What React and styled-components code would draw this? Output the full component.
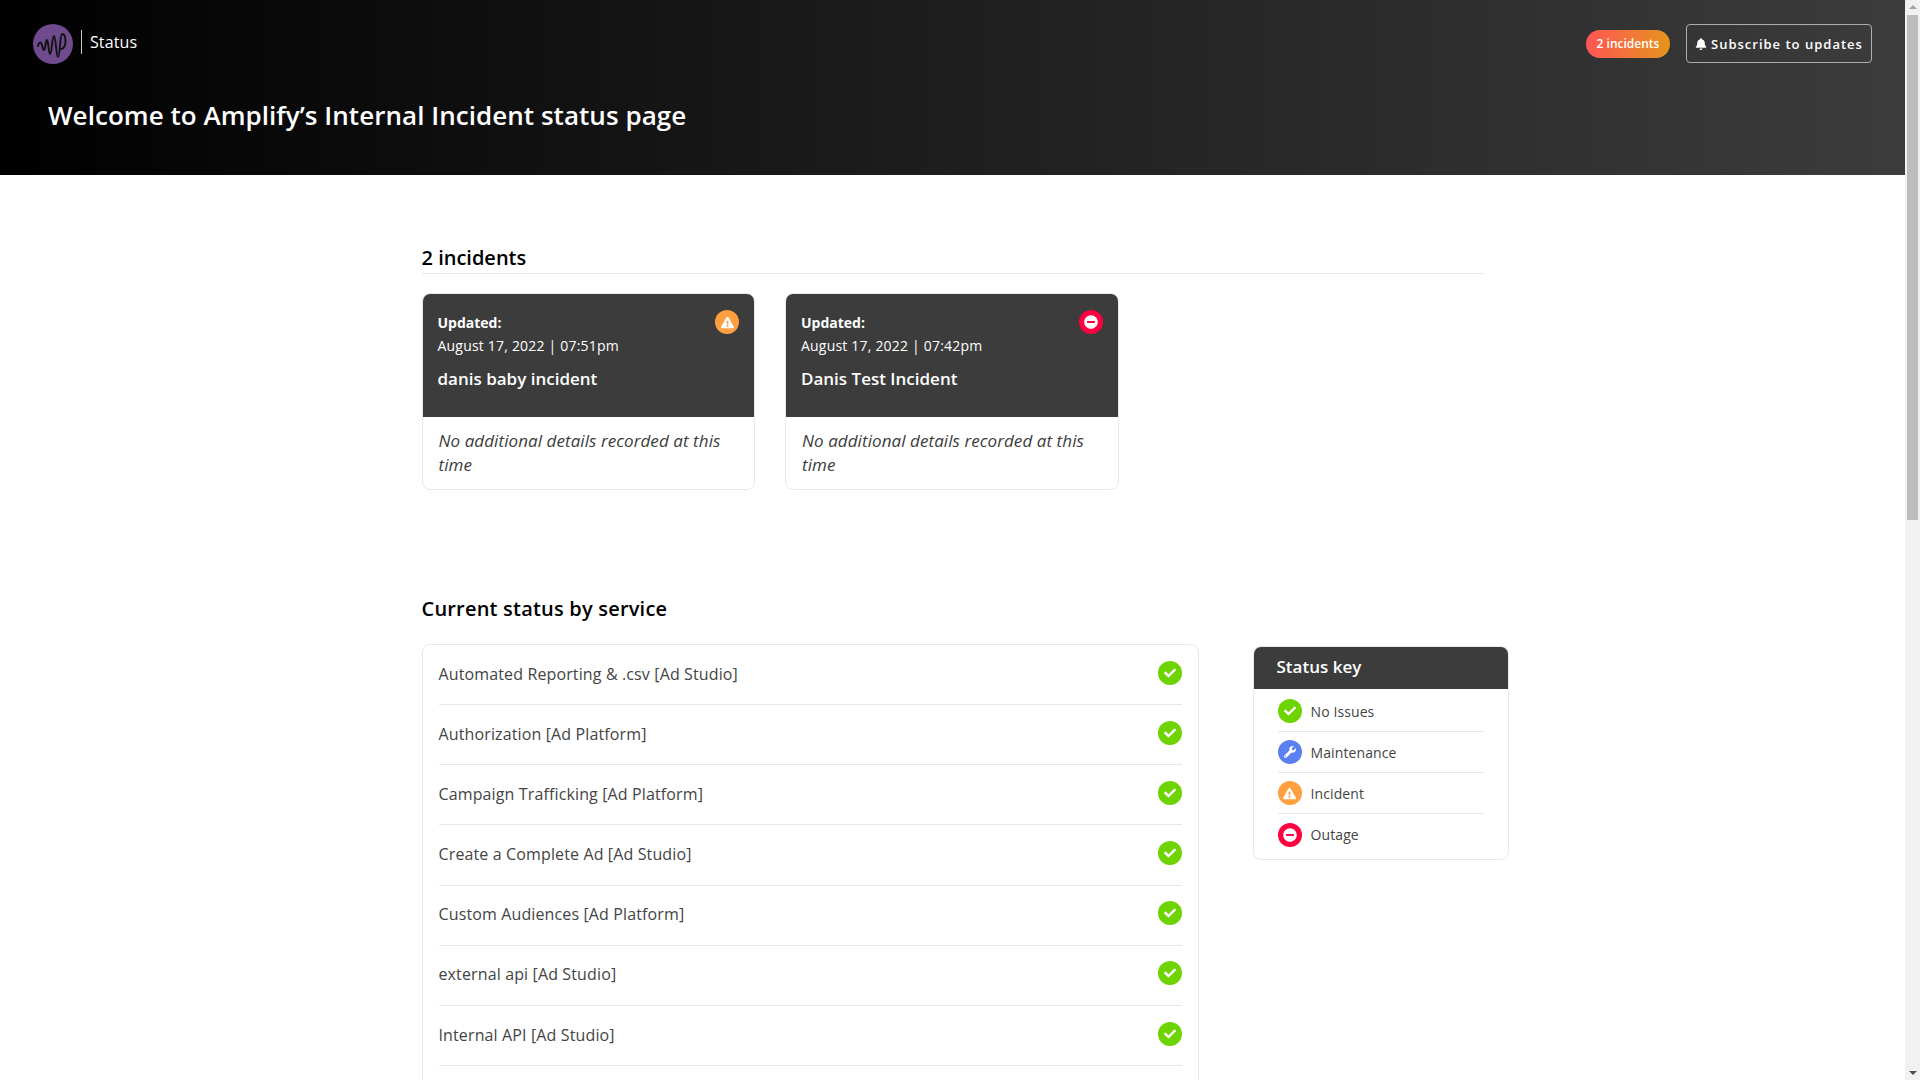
import styled, { createGlobalStyle } from "styled-components";
import {
  FaBell,
  FaCheck,
  FaExclamationTriangle,
  FaMinusCircle,
  FaWrench,
} from "react-icons/fa";

const statusTypes = {
  ok: { color: "#6dd400", Icon: FaCheck, size: 12 },
  maintenance: { color: "#5b80f2", Icon: FaWrench, size: 12 },
  incident: { color: "#ff9f40", Icon: FaExclamationTriangle, size: 13 },
  outage: { color: "#ff0040", Icon: FaMinusCircle, size: 14 },
};

const incidents = [
  { id: 1, date: "August 17, 2022 | 07:51pm", title: "danis baby incident", status: "incident" },
  { id: 2, date: "August 17, 2022 | 07:42pm", title: "Danis Test Incident", status: "outage" },
];

const services = [
  "Automated Reporting & .csv [Ad Studio]",
  "Authorization [Ad Platform]",
  "Campaign Trafficking [Ad Platform]",
  "Create a Complete Ad [Ad Studio]",
  "Custom Audiences [Ad Platform]",
  "external api [Ad Studio]",
  "Internal API [Ad Studio]",
];

const statusKey = [
  { label: "No Issues", status: "ok" },
  { label: "Maintenance", status: "maintenance" },
  { label: "Incident", status: "incident" },
  { label: "Outage", status: "outage" },
];

const StatusIcon = ({ status }) => {
  const { color, Icon, size } = statusTypes[status];
  return (
    <IconDot $color={color}>
      <Icon size={size} />
    </IconDot>
  );
};

const Logo = () => (
  <svg width="40" height="40" viewBox="0 0 40 40">
    <circle cx="20" cy="20" r="20" fill="#6f4a8c" />
    <path
      d="M5 22C5.500 19 7 18 8 19C9.500 20 9.500 26 11 26C12.500 26 12.500 16 14 16C15.500 16 15.500 30 17 30C19 30 19 12 21 12C23 12 23 33 25 33C27 33 27 10 29 10C31.500 10 32.500 14 32.500 17C32.500 21 31 24 28.500 25"
      fill="none"
      stroke="#111"
      strokeWidth="1.9"
      strokeLinecap="round"
    />
  </svg>
);

const App = () => {
  return (
    <>
      <GlobalStyle />
      <Frame>
        <Scroller>
          <Page>
            <Header>
              <TopBar>
                <Brand>
                  <Logo />
                  <BrandText>Status</BrandText>
                </Brand>
                <TopActions>
                  <IncidentBadge>2 incidents</IncidentBadge>
                  <SubscribeButton>
                    <FaBell size={12} />
                    Subscribe to updates
                  </SubscribeButton>
                </TopActions>
              </TopBar>
              <PageTitle>Welcome to Amplify’s Internal Incident status page</PageTitle>
            </Header>

            <Main>
              <IncidentsTitle>2 incidents</IncidentsTitle>
              <IncidentGrid>
                {incidents.map((item) => (
                  <IncidentCard key={item.id}>
                    <IncidentHead>
                      <UpdatedRow>
                        <UpdatedLabel>Updated:</UpdatedLabel>
                        <StatusIcon status={item.status} />
                      </UpdatedRow>
                      <UpdatedDate>{item.date}</UpdatedDate>
                      <IncidentName>{item.title}</IncidentName>
                    </IncidentHead>
                    <IncidentBody>No additional details recorded at this time</IncidentBody>
                  </IncidentCard>
                ))}
              </IncidentGrid>

              <ServicesTitle>Current status by service</ServicesTitle>
              <ServicesLayout>
                <ServiceList>
                  {services.map((name) => (
                    <ServiceRow key={name}>
                      <span>{name}</span>
                      <StatusIcon status="ok" />
                    </ServiceRow>
                  ))}
                </ServiceList>
                <KeyCard>
                  <KeyHead>Status key</KeyHead>
                  <KeyList>
                    {statusKey.map((item) => (
                      <KeyRow key={item.status}>
                        <StatusIcon status={item.status} />
                        <span>{item.label}</span>
                      </KeyRow>
                    ))}
                  </KeyList>
                </KeyCard>
              </ServicesLayout>
            </Main>
          </Page>
        </Scroller>
        <ScrollRail>
          <RailArrow $up />
          <RailThumb />
          <RailArrow />
        </ScrollRail>
      </Frame>
    </>
  );
};

const GlobalStyle = createGlobalStyle`
  html, body {
    height: 100%;
    overflow: hidden;
  }
  body {
    margin: 0;
    background: #fff;
    font-family: "Open Sans", "Liberation Sans", sans-serif;
  }
`;

const Frame = styled.div`
  display: flex;
  height: 100vh;
`;

const Scroller = styled.div`
  flex: 1;
  min-width: 0;
  overflow-y: auto;
`;

const ScrollRail = styled.div`
  display: flex;
  flex-direction: column;
  align-items: center;
  flex: none;
  width: 15px;
  background: #f1f1f1;
`;

const RailThumb = styled.div`
  width: 11px;
  height: 505px;
  margin-bottom: auto;
  background: #bdbdbd;
`;

const RailArrow = styled.div`
  width: 0;
  height: 0;
  margin: ${(props) => (props.$up ? "5px 0 6px" : "6px 0 5px")};
  border-left: 4px solid transparent;
  border-right: 4px solid transparent;
  ${(props) =>
    props.$up
      ? "border-bottom: 4px solid #a3a3a3;"
      : "border-top: 4px solid #505050;"}
`;

const IconDot = styled.span`
  display: inline-flex;
  align-items: center;
  justify-content: center;
  flex: none;
  width: 24px;
  height: 24px;
  border-radius: 50%;
  background: ${(props) => props.$color};
  color: #fff;
`;

const Page = styled.div`
  min-height: 2245px;
`;

const Header = styled.header`
  height: 175px;
  background: linear-gradient(90deg, #000 0%, #3c3c3c 100%);
  color: #fff;
`;

const TopBar = styled.div`
  display: flex;
  justify-content: space-between;
  align-items: center;
  height: 39px;
  padding: 24px 33px 0;
`;

const Brand = styled.div`
  display: flex;
  align-items: center;
`;

const BrandText = styled.div`
  margin-left: 8px;
  padding-left: 8px;
  border-left: 1px solid #c8c8c8;
  height: 24px;
  margin-top: -4px;
  font-size: 16px;
  line-height: 24px;
  letter-spacing: 0.1px;
`;

const TopActions = styled.div`
  display: flex;
  align-items: center;
  gap: 16px;
`;

const IncidentBadge = styled.div`
  display: flex;
  align-items: center;
  justify-content: center;
  width: 84px;
  height: 28px;
  border-radius: 14px;
  background: linear-gradient(90deg, #ff5555 0%, #e5941c 100%);
  font-size: 12px;
  font-weight: 600;
`;

const SubscribeButton = styled.button`
  display: flex;
  align-items: center;
  gap: 4px;
  flex: none;
  width: 186px;
  height: 39px;
  padding: 0 8px;
  background: transparent;
  border: 1px solid #a9aeb5;
  border-radius: 4px;
  color: #fff;
  font-family: inherit;
  font-size: 13px;
  font-weight: 600;
  letter-spacing: 1px;
  white-space: nowrap;

  svg {
    flex: none;
  }
`;

const PageTitle = styled.h1`
  margin: 32px 0 0 48px;
  font-size: 26px;
  line-height: 40px;
  font-weight: 600;
  letter-spacing: 0.04px;
`;

const Main = styled.main`
  width: 1062px;
  margin: 0 auto;
  padding-top: 68px;
  color: #000;
`;

const IncidentsTitle = styled.h2`
  margin: 0;
  padding-bottom: 1px;
  border-bottom: 1px solid #e8e8e8;
  font-size: 20px;
  line-height: 29px;
  font-weight: 600;
`;

const IncidentGrid = styled.div`
  display: grid;
  grid-template-columns: repeat(3, 333.5px);
  gap: 30px;
  margin-top: 19px;
`;

const IncidentCard = styled.article`
  border: 1px solid #e8e8e8;
  border-radius: 8px;
  overflow: hidden;
`;

const IncidentHead = styled.div`
  height: 124px;
  margin: -1px -1px 0;
  padding: 17px 16px 16px;
  box-sizing: border-box;
  background: #3c3c3c;
  color: #fff;
`;

const UpdatedRow = styled.div`
  display: flex;
  justify-content: space-between;
  align-items: center;
  height: 24px;
`;

const UpdatedLabel = styled.div`
  font-size: 14px;
  font-weight: 700;
`;

const UpdatedDate = styled.div`
  font-size: 14px;
  line-height: 24px;
  letter-spacing: 0.2px;
`;

const IncidentName = styled.div`
  margin-top: 8px;
  font-size: 17px;
  line-height: 26px;
  font-weight: 600;
`;

const IncidentBody = styled.div`
  padding: 12px 16px 12px;
  font-size: 17px;
  line-height: 24px;
  letter-spacing: 0.07px;
  font-style: italic;
  color: #3c3c3c;
`;

const ServicesTitle = styled.h2`
  margin: 104px 0 0;
  font-size: 20px;
  line-height: 29px;
  font-weight: 600;
  letter-spacing: 0.2px;
`;

const ServicesLayout = styled.div`
  display: grid;
  grid-template-columns: 777px 256px;
  column-gap: 54px;
  align-items: start;
  margin-top: 21px;
`;

const ServiceList = styled.div`
  box-sizing: border-box;
  min-height: 1400px;
  padding: 0 16px;
  border: 1px solid #e8e8e8;
  border-radius: 8px;
`;

const ServiceRow = styled.div`
  display: flex;
  justify-content: space-between;
  align-items: center;
  box-sizing: border-box;
  height: 60.17px;
  padding-bottom: 2px;
  border-bottom: 1px solid #e8e8e8;
  font-size: 16px;
  letter-spacing: 0.13px;
  color: #444;

  ${IconDot} {
    margin-top: -2px;
  }
`;

const KeyCard = styled.aside`
  margin-top: 2px;
  border: 1px solid #e8e8e8;
  border-radius: 8px;
  overflow: hidden;
`;

const KeyHead = styled.div`
  display: flex;
  align-items: center;
  box-sizing: border-box;
  height: 43px;
  margin: -1px -1px 0;
  padding: 0 0 2px 24px;
  background: #3c3c3c;
  color: #fff;
  font-size: 17px;
  font-weight: 600;
`;

const KeyList = styled.div`
  padding: 2px 24px 4px;
`;

const KeyRow = styled.div`
  display: flex;
  align-items: center;
  gap: 9px;
  height: 41px;
  box-sizing: border-box;
  border-bottom: 1px solid #e8e8e8;
  font-size: 14px;
  letter-spacing: 0.1px;
  color: #444;

  &:last-child {
    border-bottom: none;
  }
`;

export default App;
